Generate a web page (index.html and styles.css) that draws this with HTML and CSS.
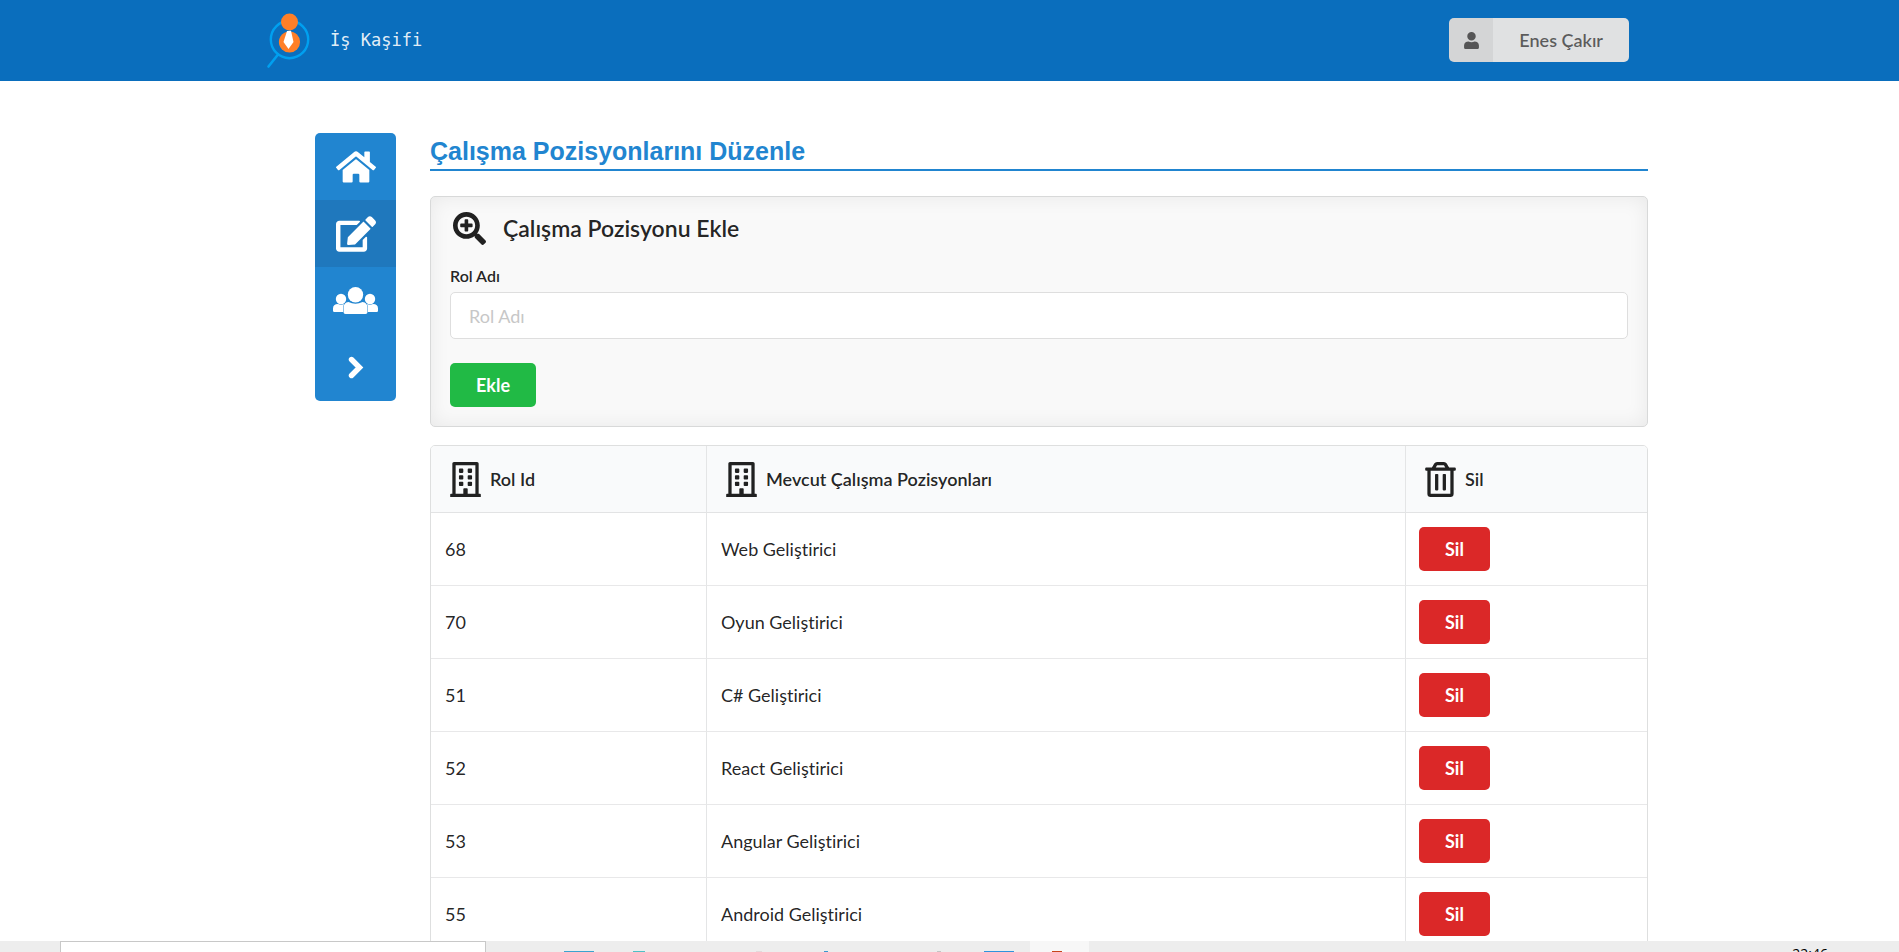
FILE: index.html
```html
<!DOCTYPE html>
<html lang="tr">
<head>
<meta charset="utf-8">
<title>İş Kaşifi</title>
<link rel="stylesheet" href="styles.css">
</head>
<body>
<svg class="sprite" aria-hidden="true">
  <symbol id="building" viewBox="0 0 448 512"><path d="M128 148v-40c0-6.600 5.400-12 12-12h40c6.600 0 12 5.400 12 12v40c0 6.600-5.400 12-12 12h-40c-6.600 0-12-5.400-12-12zm140 12h40c6.600 0 12-5.400 12-12v-40c0-6.600-5.400-12-12-12h-40c-6.600 0-12 5.400-12 12v40c0 6.600 5.400 12 12 12zm-128 96h40c6.600 0 12-5.400 12-12v-40c0-6.600-5.400-12-12-12h-40c-6.600 0-12 5.400-12 12v40c0 6.600 5.400 12 12 12zm128 0h40c6.600 0 12-5.400 12-12v-40c0-6.600-5.400-12-12-12h-40c-6.600 0-12 5.400-12 12v40c0 6.600 5.400 12 12 12zm-76 84v-40c0-6.600-5.400-12-12-12h-40c-6.600 0-12 5.400-12 12v40c0 6.600 5.400 12 12 12h40c6.600 0 12-5.400 12-12zm76 12h40c6.600 0 12-5.400 12-12v-40c0-6.600-5.400-12-12-12h-40c-6.600 0-12 5.400-12 12v40c0 6.600 5.400 12 12 12zm180 124v36H0v-36c0-6.600 5.400-12 12-12h19.500V24c0-13.300 10.700-24 24-24h337c13.300 0 24 10.700 24 24v440H436c6.600 0 12 5.400 12 12zM79.500 463H192v-67c0-6.600 5.400-12 12-12h40c6.600 0 12 5.400 12 12v67h112.500V49L80 48z"/></symbol>
</svg>
<header class="topbar">
  <div class="topbar-inner">
    <a class="brand" href="#">
      <svg class="logo" viewBox="0 0 46 58" aria-hidden="true">
        <circle cx="25.500" cy="28.500" r="18.700" fill="none" stroke="#00a0f0" stroke-width="2.400"/>
        <path d="M14 43.500 4.500 55.500" stroke="#00a0f0" stroke-width="2.600" stroke-linecap="round"/>
        <circle cx="25.500" cy="31" r="10.600" fill="#ff7f27"/>
        <circle cx="25.500" cy="11" r="8.500" fill="#ff7f27"/>
        <path d="m23 20 4-.3 2.500 11.300-5 7-5-7z" fill="#fff"/>
      </svg>
      <span>İş Kaşifi</span>
    </a>
    <button class="user" type="button">
      <span class="user-icon"><svg viewBox="0 0 448 512" aria-hidden="true"><path d="M224 256c70.700 0 128-57.300 128-128S294.700 0 224 0 96 57.300 96 128s57.300 128 128 128zm90 32c-28 13-58 20-90 20s-62-7-90-20C60 288 0 330 0 404v60c0 26.500 21.500 48 48 48h352c26.500 0 48-21.500 48-48v-60c0-74-60-116-134-116z"/></svg></span>
      <span class="user-name">Enes Çakır</span>
    </button>
  </div>
</header>
<div class="page">
  <nav class="side" aria-label="Menü">
    <a href="#" aria-label="Ana sayfa"><svg class="ic-home" viewBox="0 0 576 512"><path d="M280.400 148.300 96 300.100V464a16 16 0 0 0 16 16l112-.3a16 16 0 0 0 16-16V368a16 16 0 0 1 16-16h64a16 16 0 0 1 16 16v95.600a16 16 0 0 0 16 16.100L464 480a16 16 0 0 0 16-16V300L295.700 148.300a12.200 12.200 0 0 0-15.300 0zM571.600 251.500 488 182.600V44a12 12 0 0 0-12-12h-56a12 12 0 0 0-12 12v72.600L318.500 43a48 48 0 0 0-61 0L4.300 251.500a12 12 0 0 0-1.600 16.900l25.500 31a12 12 0 0 0 16.900 1.600l235.300-193.700a12.200 12.200 0 0 1 15.300 0L531 301a12 12 0 0 0 16.900-1.600l25.500-31a12 12 0 0 0-1.800-16.900z"/></svg></a>
    <a class="active" href="#" aria-label="Düzenle"><svg class="ic-edit" viewBox="0 0 576 512"><path d="m402.600 83.200 90.200 90.200c3.800 3.800 3.800 10 0 13.800L274.400 405.600l-92.800 10.300c-12.400 1.400-22.900-9.100-21.500-21.500l10.300-92.800L388.800 83.200c3.800-3.800 10-3.800 13.800 0zm162-22.900-48.800-48.800c-15.200-15.200-39.900-15.200-55.200 0l-35.400 35.400c-3.800 3.800-3.800 10 0 13.800l90.200 90.200c3.800 3.800 10 3.800 13.800 0l35.400-35.400c15.200-15.300 15.200-40 0-55.200zM384 346.200V448H64V128h229.800c3.200 0 6.200-1.300 8.500-3.500l40-40c7.600-7.600 2.200-20.500-8.500-20.500H48C21.500 64 0 85.500 0 112v352c0 26.500 21.500 48 48 48h352c26.500 0 48-21.500 48-48V306.200c0-10.700-12.900-16-20.500-8.500l-40 40c-2.200 2.300-3.500 5.300-3.500 8.500z"/></svg></a>
    <a href="#" aria-label="Kullanıcılar"><svg class="ic-users" viewBox="0 0 45 28"><circle cx="8" cy="12" r="5.200"/><circle cx="37" cy="12" r="5.200"/><path d="M0 24v-2.500Q0 17 5 17q3 1.500 6 0-1 2-1 5v3H1.500Q0 25 0 24zM45 24v-2.500q0-4.500-5-4.500-3 1.500-6 0 1 2 1 5v3h8.500q1.500 0 1.500-1z"/><circle cx="22.500" cy="7.700" r="7.700"/><path d="M15.500 15q7 3.500 14 0 5 .6 5 6v4q0 2-2 2h-20q-2 0-2-2v-4q0-5.400 5-6z"/></svg></a>
    <a href="#" aria-label="İleri"><svg class="ic-next" viewBox="0 0 16 24"><path d="m3.500 3.500 8 8-8 8" fill="none" stroke="#fff" stroke-width="5.400" stroke-linecap="round"/></svg></a>
  </nav>
  <main class="content">
    <h1>Çalışma Pozisyonlarını Düzenle</h1>
    <form class="segment">
      <h2><svg class="ic-zoom" viewBox="0 0 512 512" aria-hidden="true"><path d="M304 192v32c0 6.600-5.400 12-12 12h-56v56c0 6.600-5.400 12-12 12h-32c-6.600 0-12-5.400-12-12v-56h-56c-6.600 0-12-5.400-12-12v-32c0-6.600 5.400-12 12-12h56v-56c0-6.600 5.400-12 12-12h32c6.600 0 12 5.400 12 12v56h56c6.600 0 12 5.400 12 12zm201 284.700L476.700 505c-9.400 9.400-24.600 9.400-33.900 0L343 405.300c-4.500-4.500-7-10.600-7-17V372c-35.300 27.600-79.700 44-128 44C93.100 416 0 322.900 0 208S93.100 0 208 0s208 93.100 208 208c0 48.300-16.400 92.700-44 128h16.300c6.400 0 12.500 2.500 17 7l99.700 99.700c9.300 9.400 9.300 24.600 0 34zM344 208c0-75.200-60.800-136-136-136S72 132.800 72 208s60.800 136 136 136 136-60.800 136-136z"/></svg>Çalışma Pozisyonu Ekle</h2>
      <label for="rol">Rol Adı</label>
      <input id="rol" type="text" placeholder="Rol Adı">
      <button class="btn green" type="button">Ekle</button>
    </form>
    <div class="table-wrap">
    <table>
      <colgroup><col class="c-id"><col class="c-name"><col></colgroup>
      <thead><tr>
        <th><span class="head"><svg class="ic-th"><use href="#building"/></svg>Rol Id</span></th>
        <th><span class="head"><svg class="ic-th"><use href="#building"/></svg>Mevcut Çalışma Pozisyonları</span></th>
        <th><span class="head"><svg class="ic-th" viewBox="0 0 448 512"><path d="M268 416h24a12 12 0 0 0 12-12V188a12 12 0 0 0-12-12h-24a12 12 0 0 0-12 12v216a12 12 0 0 0 12 12zM432 80h-82.400l-34-56.700A48 48 0 0 0 274.400 0H173.600a48 48 0 0 0-41.200 23.300L98.400 80H16A16 16 0 0 0 0 96v16a16 16 0 0 0 16 16h16v336a48 48 0 0 0 48 48h288a48 48 0 0 0 48-48V128h16a16 16 0 0 0 16-16V96a16 16 0 0 0-16-16zM171.800 50.900A6 6 0 0 1 177 48h94a6 6 0 0 1 5.200 2.900L293.600 80H154.400zM368 464H80V128h288zm-212-48h24a12 12 0 0 0 12-12V188a12 12 0 0 0-12-12h-24a12 12 0 0 0-12 12v216a12 12 0 0 0 12 12z"/></svg>Sil</span></th>
      </tr></thead>
      <tbody>
        <tr><td>68</td><td>Web Geliştirici</td><td><button class="btn red" type="button">Sil</button></td></tr>
        <tr><td>70</td><td>Oyun Geliştirici</td><td><button class="btn red" type="button">Sil</button></td></tr>
        <tr><td>51</td><td>C# Geliştirici</td><td><button class="btn red" type="button">Sil</button></td></tr>
        <tr><td>52</td><td>React Geliştirici</td><td><button class="btn red" type="button">Sil</button></td></tr>
        <tr><td>53</td><td>Angular Geliştirici</td><td><button class="btn red" type="button">Sil</button></td></tr>
        <tr><td>55</td><td>Android Geliştirici</td><td><button class="btn red" type="button">Sil</button></td></tr>
      </tbody>
    </table>
    </div>
  </main>
</div>
<footer class="taskbar">
  <div class="task-search"></div>
  <div class="task-active"></div>
  <svg class="task-icons" viewBox="0 0 520 11" aria-hidden="true">
    <path d="M14 10h30v1H14z" fill="#3ba3cf"/><path d="M83 10h12v1H83z" fill="#4fc0c6"/><path d="M206 10h6v1h-6z" fill="#e3d9db"/><path d="M274 10h4v1h-4z" fill="#3b97cf"/><path d="M387 10h4v1h-4z" fill="#c4c4c4"/><path d="M434 10h30v1h-30z" fill="#2f93dd"/><path d="M502 10h10v1h-10z" fill="#c8441b"/>
  </svg>
  <time class="clock">22:46</time>
</footer>
</body>
</html>
```
FILE: styles.css
```css
* { box-sizing: border-box; }
body {
  margin: 0;
  height: 100vh;
  overflow: hidden;
  background: #fff;
  color: rgba(0, 0, 0, .87);
  font: 18px/24px Lato, "Liberation Sans", sans-serif;
  font-variant-ligatures: none;
}
.sprite { position: absolute; width: 0; height: 0; }
svg { fill: currentColor; flex: none; }
.topbar { background: #0a6ebd; }
.topbar-inner {
  display: flex;
  align-items: center;
  justify-content: space-between;
  max-width: 1371px;
  height: 81px;
  margin: 0 auto;
  padding: 0 6px 1px 0;
}
.brand {
  display: flex;
  align-items: center;
  gap: 20px;
  color: rgba(255, 255, 255, .9);
  font: 17px/24px "DejaVu Sans Mono", monospace;
  text-decoration: none;
}
.logo { width: 46px; height: 58px; }
.user {
  display: flex;
  height: 44px;
  padding: 0;
  overflow: hidden;
  border: 0;
  border-radius: 5px;
  background: #e0e1e2;
  color: rgba(0, 0, 0, .6);
  font: 600 18px/44px Lato, sans-serif;
}
.user-icon {
  display: flex;
  align-items: center;
  justify-content: center;
  width: 44px;
  height: 44px;
  background: rgba(0, 0, 0, .05);
}
.user-icon svg { width: 17px; height: 17px; }
.user-name { padding: 0 26px; }
.page {
  display: flex;
  align-items: flex-start;
  gap: 34px;
  max-width: 1397px;
  margin: 52px auto 0;
  padding-left: 64px;
}
.side {
  flex: none;
  width: 81px;
  overflow: hidden;
  border-radius: 5px;
  background: #2185d0;
  color: #fff;
}
.side a {
  display: flex;
  align-items: center;
  justify-content: center;
  height: 67px;
  color: inherit;
}
.side .active { background: #1f78bd; }
.ic-home, .ic-edit { width: 40px; height: 36px; }
.ic-users { width: 45px; height: 28px; }
.ic-next { width: 16px; height: 24px; }
.content { flex: 1; min-width: 0; }
h1 {
  margin: 0 0 25px;
  padding: 2px 0 2px;
  border-bottom: 2px solid #2185d0;
  color: #2185d0;
  font: bold 25px/32px "Liberation Sans", Arial, sans-serif;
}
.segment {
  padding: 12px 19px 19px;
  border: 1px solid #d8d9d9;
  border-radius: 5px;
  background: #f9f9f9;
  box-shadow: inset 0 0 20px rgba(0, 0, 0, .07);
}
h2 {
  display: flex;
  align-items: center;
  gap: 17px;
  margin: 0 0 17px;
  padding-left: 3px;
  font-size: 23px;
  font-weight: 600;
  line-height: 38px;
}
.ic-zoom { width: 33px; height: 33px; }
label {
  display: block;
  margin-bottom: 5px;
  font-size: 16px;
  font-weight: 600;
  line-height: 23px;
}
input {
  display: block;
  width: 100%;
  height: 47px;
  margin-bottom: 24px;
  padding: 0 18px;
  border: 1px solid #dedede;
  border-radius: 5px;
  background: #fff;
  font: 18px/24px Lato, sans-serif;
}
input::placeholder { color: #c7c7c7; opacity: 1; }
.btn {
  display: block;
  height: 44px;
  padding: 0 26px;
  border: 0;
  border-radius: 5px;
  color: #fff;
  font: bold 18px/44px Lato, sans-serif;
}
.green { background: #21ba45; }
.red { background: #db2828; }
.table-wrap {
  margin-top: 18px;
  border: 1px solid #dedfdf;
  border-radius: 5px;
  overflow: hidden;
}
table { width: 100%; border-collapse: separate; border-spacing: 0; table-layout: fixed; }
.c-id { width: 275px; }
.c-name { width: 699px; }
th {
  height: 67px;
  padding: 0 19px;
  border-bottom: 1px solid #e2e3e4;
  background: #f9fafb;
  font-weight: 600;
  text-align: left;
}
.head { display: flex; align-items: center; gap: 9px; }
.ic-th { width: 31px; height: 35px; }
td { height: 73px; padding: 0 14px; border-bottom: 1px solid #e8e8e9; }
th + th, td + td { border-left: 1px solid #e4e5e6; }
td + td + td { padding-left: 13px; }
.taskbar {
  position: fixed;
  inset: auto 0 0;
  display: flex;
  height: 11px;
  padding-left: 60px;
  background: #ededed;
  overflow: hidden;
}
.task-search { width: 426px; border: 1px solid #c8c8c8; border-bottom: 0; background: #fff; }
.task-active { position: absolute; left: 1030px; width: 59px; height: 11px; background: #f7f7f7; }
.task-icons { position: absolute; left: 550px; width: 520px; height: 11px; }
.clock { margin: 4px 71px 0 auto; color: #000; font: 14px/17px "Open Sans", sans-serif; }
```
